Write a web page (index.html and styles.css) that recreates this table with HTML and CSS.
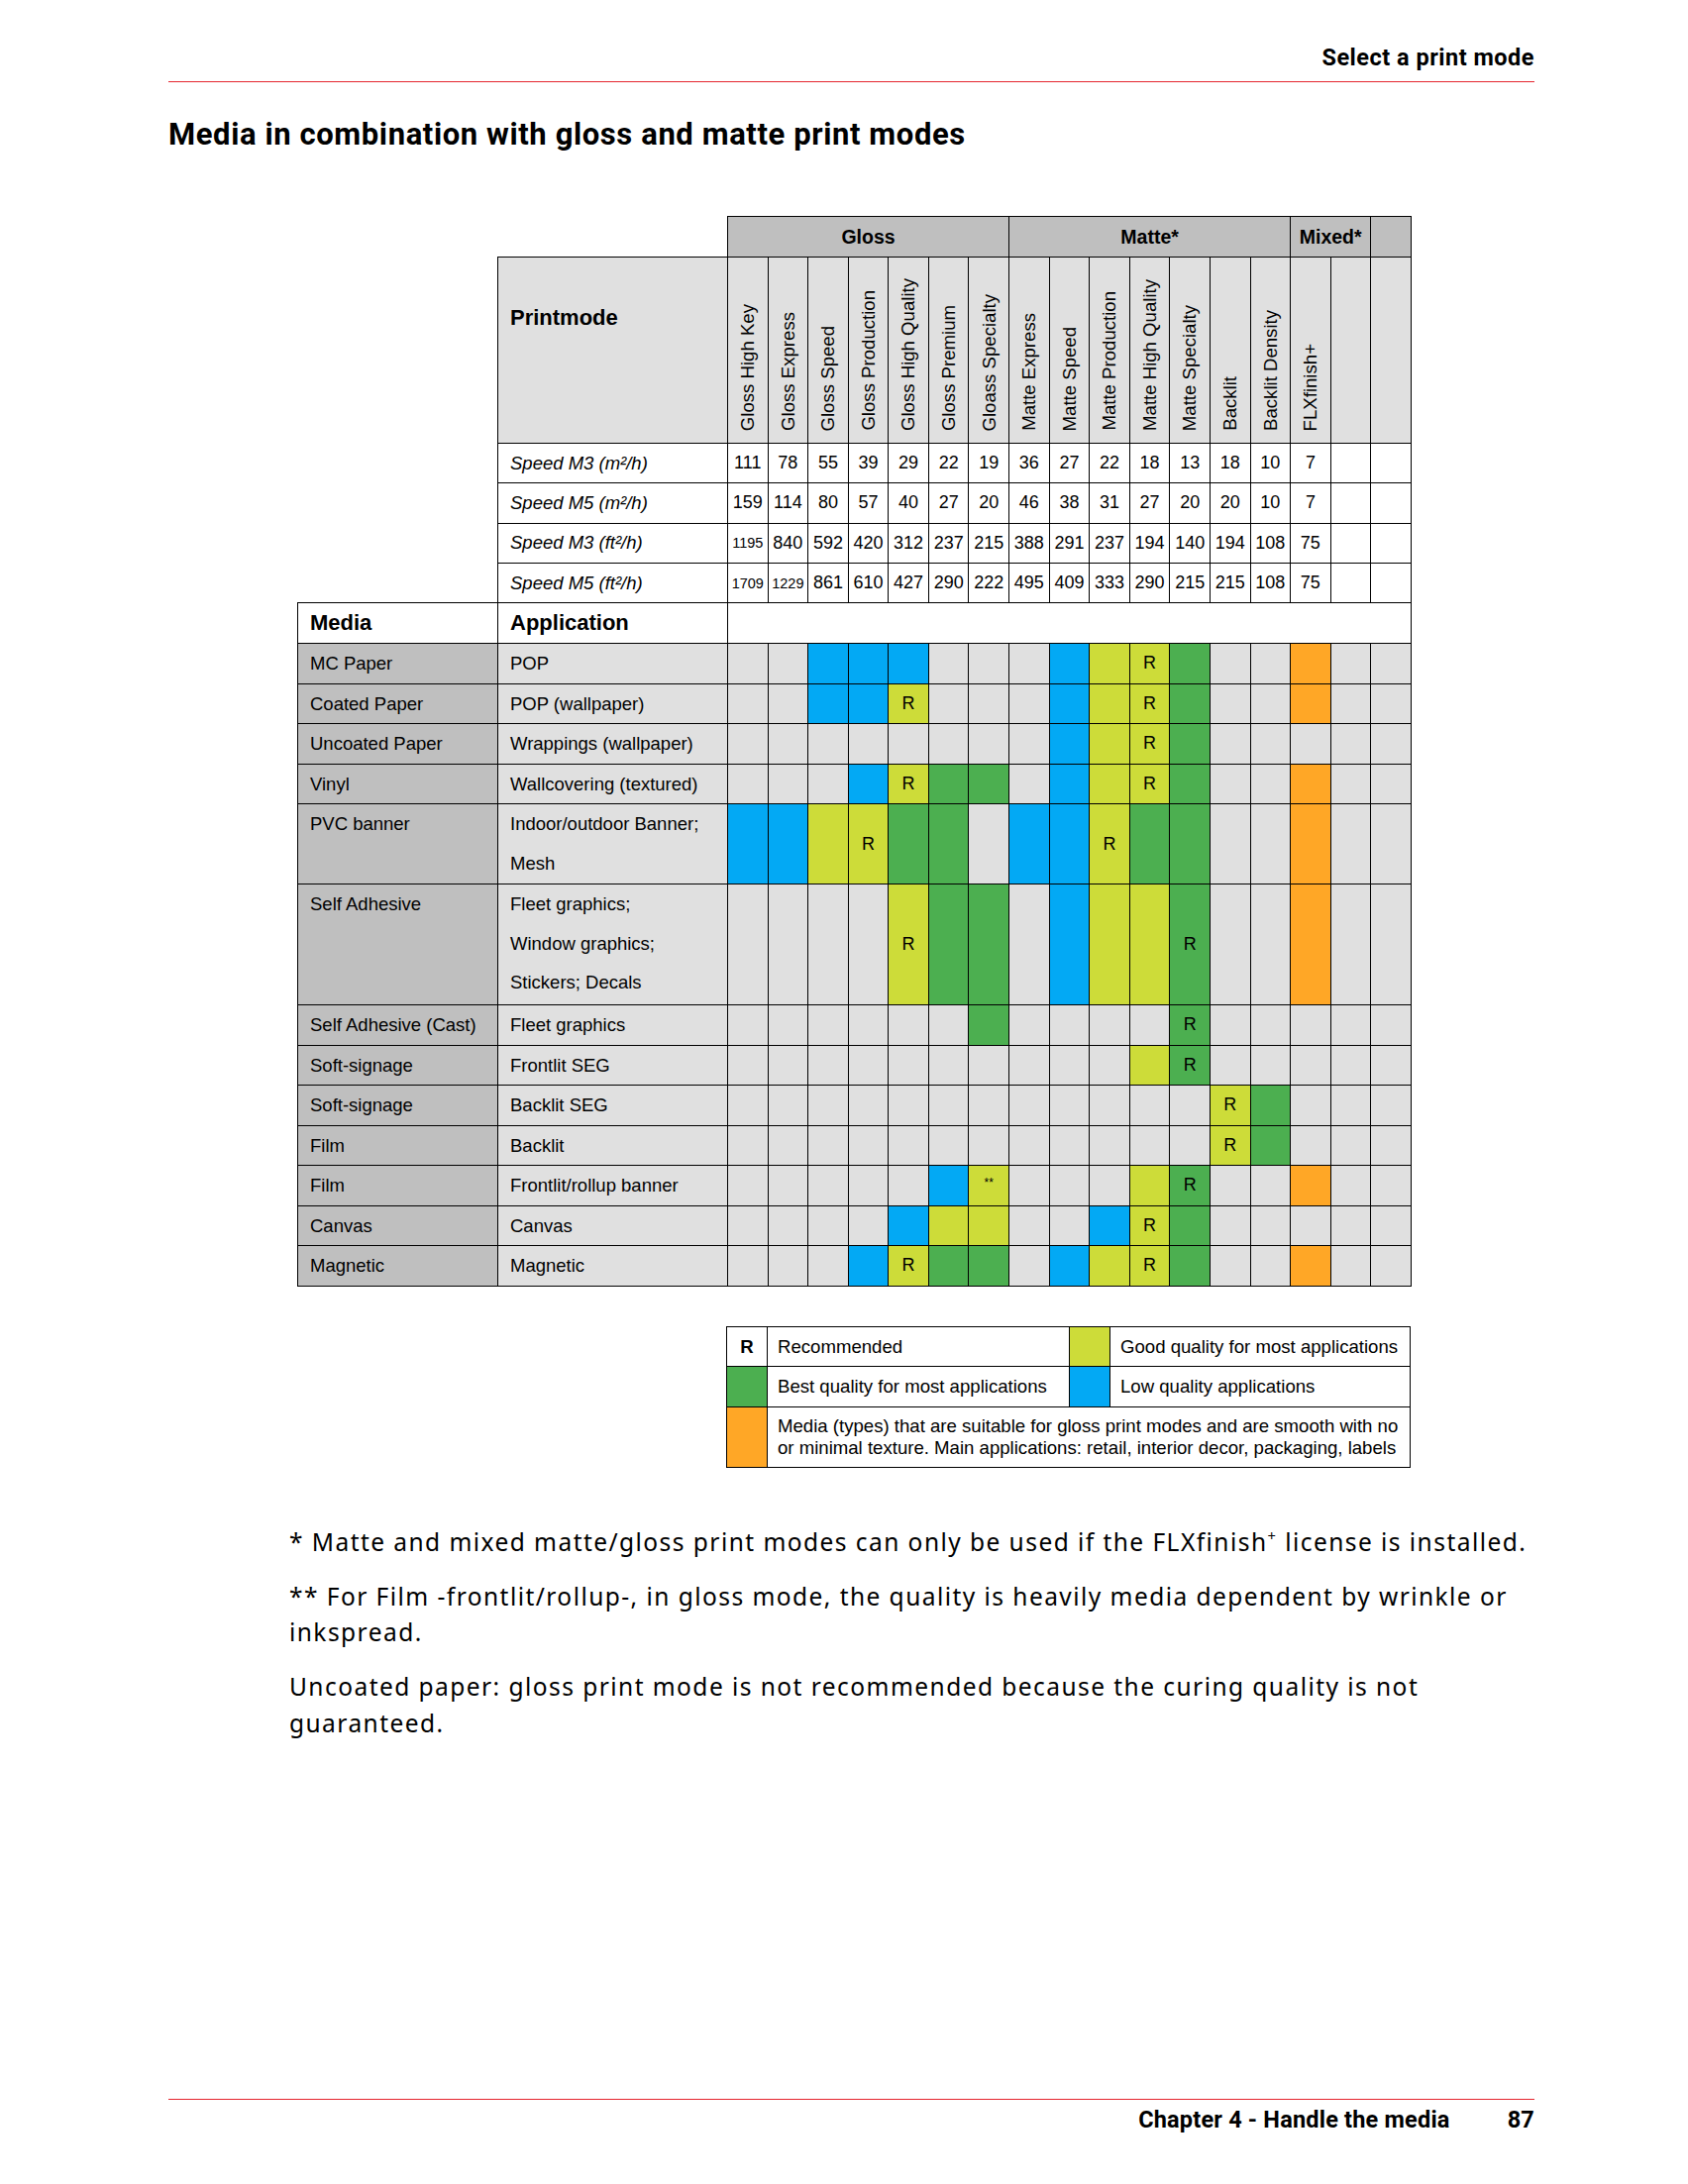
FILE: index.html
```html
<!DOCTYPE html>
<html lang="en">
<head>
<meta charset="utf-8">
<title>Select a print mode</title>
<link rel="stylesheet" href="styles.css">
</head>
<body>
<div class="page">
  <header class="running-head"><span>Select a print mode</span></header>
  <h1 class="title">Media in combination with gloss and matte print modes</h1>

  <table class="matrix">
    <colgroup><col class="c-media"><col class="c-app"><col span="17"></colgroup>
    <tr class="r-group">
      <td class="void" colspan="2"></td>
      <th class="grp" colspan="7">Gloss</th>
      <th class="grp" colspan="7">Matte*</th>
      <th class="grp" colspan="2">Mixed*</th>
      <th class="grp"></th>
    </tr>
    <tr class="r-modes">
      <td class="void"></td>
      <th class="pm">Printmode</th>
      <th class="rot"><span>Gloss High Key</span></th>
      <th class="rot"><span>Gloss Express</span></th>
      <th class="rot"><span>Gloss Speed</span></th>
      <th class="rot"><span>Gloss Production</span></th>
      <th class="rot"><span>Gloss High Quality</span></th>
      <th class="rot"><span>Gloss Premium</span></th>
      <th class="rot"><span>Gloass Specialty</span></th>
      <th class="rot"><span>Matte Express</span></th>
      <th class="rot"><span>Matte Speed</span></th>
      <th class="rot"><span>Matte Production</span></th>
      <th class="rot"><span>Matte High Quality</span></th>
      <th class="rot"><span>Matte Specialty</span></th>
      <th class="rot"><span>Backlit</span></th>
      <th class="rot"><span>Backlit Density</span></th>
      <th class="rot"><span>FLXfinish+</span></th>
      <th class="rot"></th>
      <th class="rot"></th>
    </tr>
    <tr class="r-speed">
      <td class="void"></td><td class="spd">Speed M3 (m²/h)</td>
      <td>111</td><td>78</td><td>55</td><td>39</td><td>29</td><td>22</td><td>19</td><td>36</td><td>27</td><td>22</td><td>18</td><td>13</td><td>18</td><td>10</td><td>7</td><td></td><td></td>
    </tr>
    <tr class="r-speed">
      <td class="void"></td><td class="spd">Speed M5 (m²/h)</td>
      <td>159</td><td>114</td><td>80</td><td>57</td><td>40</td><td>27</td><td>20</td><td>46</td><td>38</td><td>31</td><td>27</td><td>20</td><td>20</td><td>10</td><td>7</td><td></td><td></td>
    </tr>
    <tr class="r-speed">
      <td class="void"></td><td class="spd">Speed M3 (ft²/h)</td>
      <td class="sm">1195</td><td>840</td><td>592</td><td>420</td><td>312</td><td>237</td><td>215</td><td>388</td><td>291</td><td>237</td><td>194</td><td>140</td><td>194</td><td>108</td><td>75</td><td></td><td></td>
    </tr>
    <tr class="r-speed">
      <td class="void"></td><td class="spd">Speed M5 (ft²/h)</td>
      <td class="sm">1709</td><td class="sm">1229</td><td>861</td><td>610</td><td>427</td><td>290</td><td>222</td><td>495</td><td>409</td><td>333</td><td>290</td><td>215</td><td>215</td><td>108</td><td>75</td><td></td><td></td>
    </tr>
    <tr class="r-head">
      <th class="mh">Media</th><th class="mh">Application</th><td class="blank" colspan="17"></td>
    </tr>

    <tr class="row l1">
      <td class="media">MC Paper</td><td class="app">POP</td>
      <td></td><td></td><td class="b"></td><td class="b"></td><td class="b"></td><td></td><td></td>
      <td></td><td class="b"></td><td class="l"></td><td class="l">R</td><td class="g"></td><td></td><td></td>
      <td class="o"></td><td></td><td></td>
    </tr>
    <tr class="row l1">
      <td class="media">Coated Paper</td><td class="app">POP (wallpaper)</td>
      <td></td><td></td><td class="b"></td><td class="b"></td><td class="l">R</td><td></td><td></td>
      <td></td><td class="b"></td><td class="l"></td><td class="l">R</td><td class="g"></td><td></td><td></td>
      <td class="o"></td><td></td><td></td>
    </tr>
    <tr class="row l1">
      <td class="media">Uncoated Paper</td><td class="app">Wrappings (wallpaper)</td>
      <td></td><td></td><td></td><td></td><td></td><td></td><td></td>
      <td></td><td class="b"></td><td class="l"></td><td class="l">R</td><td class="g"></td><td></td><td></td>
      <td></td><td></td><td></td>
    </tr>
    <tr class="row l1">
      <td class="media">Vinyl</td><td class="app">Wallcovering (textured)</td>
      <td></td><td></td><td></td><td class="b"></td><td class="l">R</td><td class="g"></td><td class="g"></td>
      <td></td><td class="b"></td><td class="l"></td><td class="l">R</td><td class="g"></td><td></td><td></td>
      <td class="o"></td><td></td><td></td>
    </tr>
    <tr class="row l2">
      <td class="media">PVC banner</td><td class="app">Indoor/outdoor Banner;<br>Mesh</td>
      <td class="b"></td><td class="b"></td><td class="l"></td><td class="l">R</td><td class="g"></td><td class="g"></td><td></td>
      <td class="b"></td><td class="b"></td><td class="l">R</td><td class="g"></td><td class="g"></td><td></td><td></td>
      <td class="o"></td><td></td><td></td>
    </tr>
    <tr class="row l3">
      <td class="media">Self Adhesive</td><td class="app">Fleet graphics;<br>Window graphics;<br>Stickers; Decals</td>
      <td></td><td></td><td></td><td></td><td class="l">R</td><td class="g"></td><td class="g"></td>
      <td></td><td class="b"></td><td class="l"></td><td class="l"></td><td class="g">R</td><td></td><td></td>
      <td class="o"></td><td></td><td></td>
    </tr>
    <tr class="row l1">
      <td class="media">Self Adhesive (Cast)</td><td class="app">Fleet graphics</td>
      <td></td><td></td><td></td><td></td><td></td><td></td><td class="g"></td>
      <td></td><td></td><td></td><td></td><td class="g">R</td><td></td><td></td>
      <td></td><td></td><td></td>
    </tr>
    <tr class="row l1">
      <td class="media">Soft-signage</td><td class="app">Frontlit SEG</td>
      <td></td><td></td><td></td><td></td><td></td><td></td><td></td>
      <td></td><td></td><td></td><td class="l"></td><td class="g">R</td><td></td><td></td>
      <td></td><td></td><td></td>
    </tr>
    <tr class="row l1">
      <td class="media">Soft-signage</td><td class="app">Backlit SEG</td>
      <td></td><td></td><td></td><td></td><td></td><td></td><td></td>
      <td></td><td></td><td></td><td></td><td></td><td class="l">R</td><td class="g"></td>
      <td></td><td></td><td></td>
    </tr>
    <tr class="row l1">
      <td class="media">Film</td><td class="app">Backlit</td>
      <td></td><td></td><td></td><td></td><td></td><td></td><td></td>
      <td></td><td></td><td></td><td></td><td></td><td class="l">R</td><td class="g"></td>
      <td></td><td></td><td></td>
    </tr>
    <tr class="row l1">
      <td class="media">Film</td><td class="app">Frontlit/rollup banner</td>
      <td></td><td></td><td></td><td></td><td></td><td class="b"></td><td class="l star">**</td>
      <td></td><td></td><td></td><td class="l"></td><td class="g">R</td><td></td><td></td>
      <td class="o"></td><td></td><td></td>
    </tr>
    <tr class="row l1">
      <td class="media">Canvas</td><td class="app">Canvas</td>
      <td></td><td></td><td></td><td></td><td class="b"></td><td class="l"></td><td class="l"></td>
      <td></td><td></td><td class="b"></td><td class="l">R</td><td class="g"></td><td></td><td></td>
      <td></td><td></td><td></td>
    </tr>
    <tr class="row l1">
      <td class="media">Magnetic</td><td class="app">Magnetic</td>
      <td></td><td></td><td></td><td class="b"></td><td class="l">R</td><td class="g"></td><td class="g"></td>
      <td></td><td class="b"></td><td class="l"></td><td class="l">R</td><td class="g"></td><td></td><td></td>
      <td class="o"></td><td></td><td></td>
    </tr>
  </table>

  <table class="legend">
    <colgroup><col class="k-sw"><col class="k-txt"><col class="k-sw"><col class="k-txt2"></colgroup>
    <tr class="k1">
      <td class="sw key-r">R</td><td class="txt">Recommended</td>
      <td class="sw l"></td><td class="txt">Good quality for most applications</td>
    </tr>
    <tr class="k1">
      <td class="sw g"></td><td class="txt">Best quality for most applications</td>
      <td class="sw b"></td><td class="txt">Low quality applications</td>
    </tr>
    <tr class="k2">
      <td class="sw o"></td>
      <td class="txt two" colspan="3">Media (types) that are suitable for gloss print modes and are smooth with no<br>or minimal texture. Main applications: retail, interior decor, packaging, labels</td>
    </tr>
  </table>

  <div class="notes">
    <p>* Matte and mixed matte/gloss print modes can only be used if the FLXfinish<sup class="plus">+</sup> license is installed.</p>
    <p>** For Film -frontlit/rollup-, in gloss mode, the quality is heavily media dependent by wrinkle or inkspread.</p>
    <p>Uncoated paper: gloss print mode is not recommended because the curing quality is not guaranteed.</p>
  </div>

  <footer class="running-foot">
    <span class="chapter">Chapter 4 - Handle the media</span>
    <span class="pageno">87</span>
  </footer>
</div>
</body>
</html>
```

FILE: styles.css
```css
html, body {
  margin: 0;
  padding: 0;
  background: #ffffff;
}

.page {
  width: 1704px;
  height: 2205px;
  box-sizing: border-box;
  padding: 0 155px 0 170px;
  display: flex;
  flex-direction: column;
  align-items: flex-start;
  font-family: "Liberation Sans", Arial, sans-serif;
  color: #000;
}

/* running head */
.running-head {
  align-self: stretch;
  padding: 44px 0 10px;
  border-bottom: 1px solid #e5262f;
  text-align: right;
  font-family: Roboto, "Liberation Sans", sans-serif;
  font-weight: 700;
  font-size: 23.5px;
  letter-spacing: 0.5px;
  line-height: 28px;
}

.title {
  margin: 35px 0 0;
  font-family: Roboto, "Liberation Sans", sans-serif;
  font-weight: 700;
  font-size: 31px;
  letter-spacing: 0.6px;
  line-height: 36px;
}

/* main matrix */
.matrix {
  margin: 64px 0 0 130px;
  border-collapse: collapse;
  table-layout: fixed;
  width: 1125px;
  font-size: 18px;
}
.c-media { width: 202px; }
.c-app { width: 232px; }

.matrix td, .matrix th {
  border: 1px solid #000;
  padding: 0;
  font-weight: 400;
  text-align: center;
  vertical-align: middle;
}
.matrix td.void {
  border: none;
  background: #fff;
}

.r-group { height: 41px; }
.r-group th.grp {
  background: #bfbfbf;
  font-weight: 700;
  font-size: 19.5px;
}

.r-modes { height: 188px; }
.r-modes th {
  background: #e0e0e0;
}
.r-modes th.pm {
  text-align: left;
  vertical-align: top;
  padding: 48px 0 0 12px;
  font-weight: 700;
  font-size: 22px;
}
.r-modes th.rot {
  vertical-align: bottom;
  padding-bottom: 12px;
  line-height: 1.15;
}
.rot span {
  display: inline-block;
  vertical-align: bottom;
  writing-mode: vertical-rl;
  transform: rotate(180deg);
  white-space: nowrap;
  font-size: 18.6px;
}

.r-speed { height: 40.3px; }
.r-speed td { background: #fff; }
.r-speed td.spd {
  text-align: left;
  padding-left: 12px;
  font-style: italic;
  font-size: 18.5px;
}
.r-speed td.sm {
  font-size: 14.5px;
}

.r-head { height: 41px; }
.r-head th.mh {
  background: #fff;
  text-align: left;
  padding-left: 12px;
  font-weight: 700;
  font-size: 22px;
}
.r-head td.blank { background: #fff; }

.row.l1 { height: 40.56px; }
.row.l2 { height: 81.12px; }
.row.l3 { height: 121.68px; }

.row > td {
  background: #e0e0e0;
  line-height: 39.5px;
}
.row > td.media {
  background: #bfbfbf;
  text-align: left;
  vertical-align: top;
  padding-left: 12px;
  font-size: 18.5px;
}
.row > td.app {
  text-align: left;
  vertical-align: top;
  padding-left: 12px;
  font-size: 18.5px;
}
.row > td.star {
  font-size: 12px;
  line-height: 1;
  padding-bottom: 6px;
}

.row > td.b, .legend td.b { background: #03a9f4; }
.row > td.l, .legend td.l { background: #cddc39; }
.row > td.g, .legend td.g { background: #4caf50; }
.row > td.o, .legend td.o { background: #ffa726; }

/* legend */
.legend {
  margin: 40px 0 0 563px;
  border-collapse: collapse;
  table-layout: fixed;
  width: 690px;
  font-size: 18.6px;
}
.k-sw { width: 41px; }
.k-txt { width: 305px; }
.k-txt2 { width: 303px; }
.legend td {
  border: 1px solid #000;
  padding: 0;
  background: #fff;
  vertical-align: middle;
}
.legend tr.k1 { height: 40.5px; }
.legend tr.k2 { height: 61px; }
.legend td.key-r {
  text-align: center;
  font-weight: 700;
}
.legend td.txt {
  padding-left: 10px;
  white-space: nowrap;
}
.legend td.two {
  line-height: 21.5px;
}

/* notes */
.notes {
  margin: 57px 0 0 122px;
  width: 1265px;
  font-family: "Noto Sans", "Open Sans", sans-serif;
  font-size: 24.5px;
  line-height: 36.5px;
  letter-spacing: 1.45px;
}
.notes p {
  margin: 0 0 18.5px;
}
.plus {
  font-size: 0.6em;
  line-height: 0;
  vertical-align: 0.7em;
}

/* running foot */
.running-foot {
  align-self: stretch;
  margin-top: auto;
  border-top: 1px solid #e5262f;
  padding: 6px 0 51px;
  display: flex;
  justify-content: flex-end;
  gap: 58px;
  font-family: Roboto, "Liberation Sans", sans-serif;
  font-weight: 700;
  font-size: 23.5px;
  letter-spacing: 0.2px;
  line-height: 28px;
}
```
